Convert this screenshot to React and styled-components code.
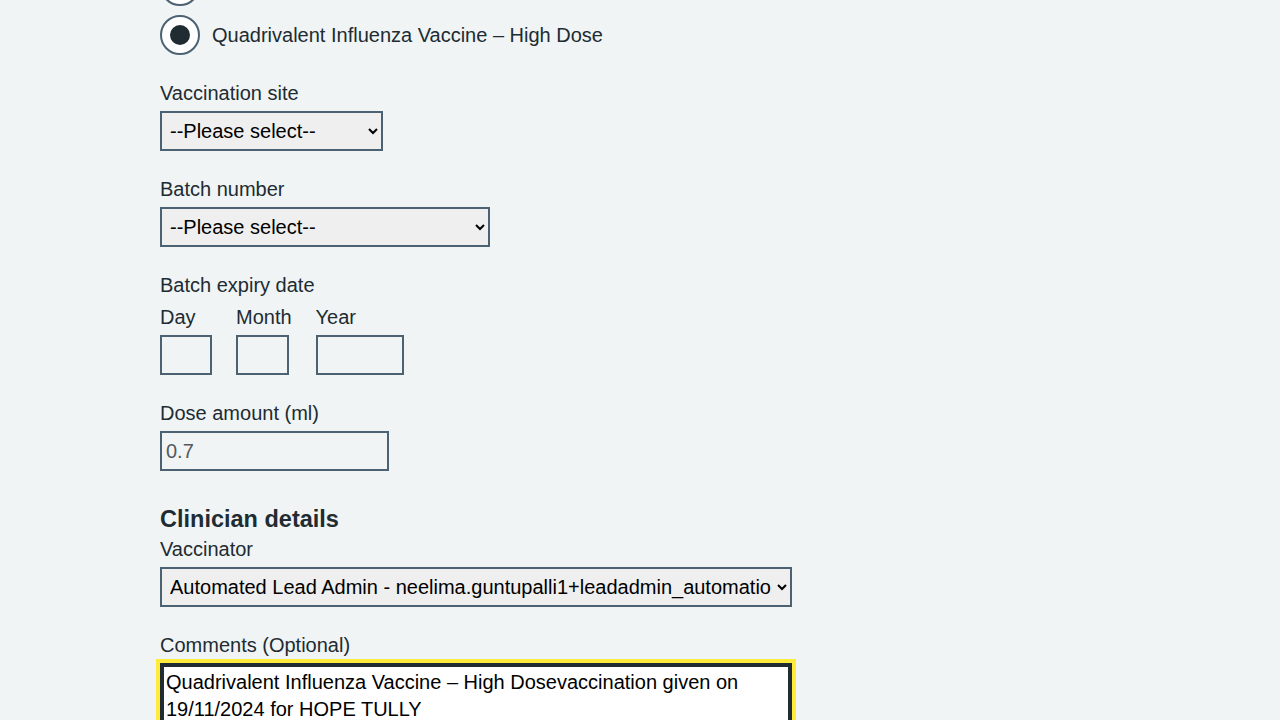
import styled, { createGlobalStyle } from 'styled-components';

const GlobalStyle = createGlobalStyle`
  html, body {
    margin: 0;
    padding: 0;
    background: #f0f4f5;
    overflow: hidden;
  }
  body {
    font-family: "Liberation Sans", Arial, sans-serif;
    color: #212b32;
  }
`;

const Page = styled.main`
  padding-left: 160px;
  margin-top: -34px;
  width: 640px;
`;

const Radios = styled.div`
  display: flex;
  flex-direction: column;
  gap: 9px;
  margin-bottom: 24px;
`;

const RadioItem = styled.label`
  display: flex;
  align-items: center;
  gap: 12px;
  font-size: 20px;
  line-height: 28px;
  cursor: pointer;
`;

const RadioCircle = styled.span`
  box-sizing: border-box;
  width: 40px;
  height: 40px;
  flex: 0 0 40px;
  border: 2px solid #4c6272;
  border-radius: 50%;
  background: #ffffff;
  display: flex;
  align-items: center;
  justify-content: center;

  &::after {
    content: '';
    width: 20px;
    height: 20px;
    border-radius: 50%;
    background: ${p => (p.$checked ? '#212b32' : 'transparent')};
  }
`;

const FormGroup = styled.div`
  margin-bottom: ${p => p.$mb ?? 24}px;
`;

const Label = styled.label`
  display: block;
  font-size: 20px;
  line-height: 28px;
  margin-bottom: 4px;
`;

const Heading = styled.h2`
  margin: 32px 0 0;
  font-size: 23.5px;
  line-height: 32px;
  font-weight: 700;
`;

const Select = styled.select`
  box-sizing: border-box;
  height: 40px;
  width: ${p => p.$w}px;
  border: 2px solid #4c6272;
  border-radius: 0;
  background-color: #efefef;
  color: #000;
  font-family: inherit;
  font-size: 20px;
  padding: 0 2px 0 4px;
`;

const DateRow = styled.div`
  display: flex;
  gap: 24px;
`;

const DateItem = styled.div`
  display: flex;
  flex-direction: column;
  align-items: flex-start;
`;

const Input = styled.input`
  box-sizing: border-box;
  height: 40px;
  width: ${p => p.$w}px;
  border: 2px solid #4c6272;
  border-radius: 0;
  background: #f0f4f5;
  font-family: inherit;
  font-size: 20px;
  color: ${p => (p.$muted ? '#55595c' : '#212b32')};
  padding: 0 4px;
  outline: none;
`;

const TextArea = styled.textarea`
  box-sizing: border-box;
  display: block;
  width: 632px;
  height: 100px;
  border: 2px solid #212b32;
  box-shadow: inset 0 0 0 2px #212b32;
  outline: 4px solid #ffeb3b;
  background: #ffffff;
  color: #000;
  font-family: inherit;
  font-size: 20px;
  line-height: 27px;
  padding: 4px;
  resize: none;
`;

const Legend = styled.div`
  font-size: 20px;
  line-height: 28px;
  margin-bottom: 4px;
`;

export default function App() {
  return (
    <>
      <GlobalStyle />
      <Page>
        <Radios>
          <RadioItem aria-label="Quadrivalent Influenza Vaccine">
            <RadioCircle />
          </RadioItem>
          <RadioItem>
            <RadioCircle $checked />
            Quadrivalent Influenza Vaccine – High Dose
          </RadioItem>
        </Radios>

        <FormGroup>
          <Label htmlFor="site">Vaccination site</Label>
          <Select id="site" $w={223} defaultValue="">
            <option value="">--Please select--</option>
            <option>Left upper arm</option>
            <option>Right upper arm</option>
          </Select>
        </FormGroup>

        <FormGroup>
          <Label htmlFor="batch">Batch number</Label>
          <Select id="batch" $w={330} defaultValue="">
            <option value="">--Please select--</option>
          </Select>
        </FormGroup>

        <FormGroup>
          <Legend>Batch expiry date</Legend>
          <DateRow>
            <DateItem>
              <Label htmlFor="day">Day</Label>
              <Input id="day" $w={52} />
            </DateItem>
            <DateItem>
              <Label htmlFor="month">Month</Label>
              <Input id="month" $w={53} />
            </DateItem>
            <DateItem>
              <Label htmlFor="year">Year</Label>
              <Input id="year" $w={88} />
            </DateItem>
          </DateRow>
        </FormGroup>

        <FormGroup $mb={0}>
          <Label htmlFor="dose">Dose amount (ml)</Label>
          <Input id="dose" $w={229} $muted defaultValue="0.7" readOnly />
        </FormGroup>

        <Heading>Clinician details</Heading>

        <FormGroup>
          <Label htmlFor="vaccinator">Vaccinator</Label>
          <Select id="vaccinator" $w={632} defaultValue="lead">
            <option value="lead">
              Automated Lead Admin - neelima.guntupalli1+leadadmin_automation@nhs.net
            </option>
          </Select>
        </FormGroup>

        <FormGroup>
          <Label htmlFor="comments">Comments (Optional)</Label>
          <TextArea
            id="comments"
            defaultValue="Quadrivalent Influenza Vaccine – High Dosevaccination given on 19/11/2024 for HOPE TULLY"
          />
        </FormGroup>
      </Page>
    </>
  );
}
